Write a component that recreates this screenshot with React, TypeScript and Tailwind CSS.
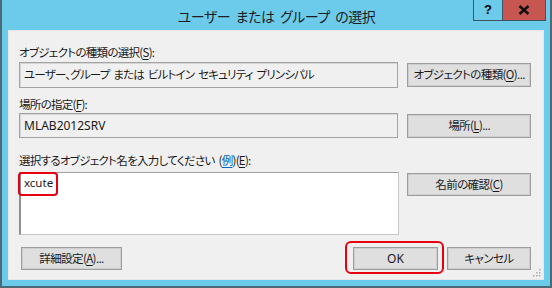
import React from "react";

const font = "font-['Noto_Sans_CJK_JP','Noto_Sans',sans-serif] [font-feature-settings:'palt']";

function U({ children }: { children: React.ReactNode }) {
  return <span className="underline underline-offset-2">{children}</span>;
}

function Btn({ className, children }: { className: string; children: React.ReactNode }) {
  return (
    <div
      className={`flex items-center justify-center whitespace-nowrap border border-[#9d9d9d] bg-[#dfdfdf] shadow-[inset_0_0_0_1px_#cfcfcf] text-[11.5px] tracking-[-0.6px] text-[#1a1a1a] leading-none ${className}`}
    >
      {children}
    </div>
  );
}

export default function App() {
  return (
    <div className={`${font} relative w-[552px] h-[288px] bg-[#6ccbea] border-l-2 border-r-2 border-b-2 border-[#4d6b77] flex flex-col`}>
      {/* Title bar */}
      <div className="h-[30px] flex items-center justify-center shrink-0">
        <span className="text-[14px] tracking-[-0.5px] [word-spacing:3px] text-[#1e1e1e] leading-none pl-[1px] mt-[1px]">ユーザー または グループ の選択</span>
      </div>
      <div className="absolute top-0 left-[471px] flex">
        <div className="w-[30px] h-[21px] border border-t-0 border-[#3c5560] bg-[#6ccbea] flex items-center justify-center text-[13px] font-bold text-black font-['Liberation_Sans',sans-serif]">?</div>
        <div className="w-[43px] h-[21px] border border-t-0 border-l-0 border-[#3c5560] bg-[#c75550] flex items-center justify-center">
          <svg width="12" height="10" viewBox="0 0 12 10">
            <path d="M1.5 1 L10.5 9 M10.5 1 L1.5 9" stroke="#111" strokeWidth="2.6" />
          </svg>
        </div>
      </div>

      {/* Content */}
      <div className="relative mx-[6px] h-[250px] bg-[#f0f0f0] border border-[#e6e6e6] flex flex-col pl-[10px] pr-[12px] text-[11.5px] tracking-[-0.7px] [word-spacing:2px] text-[#1a1a1a]">
        <div className="mt-[13px] h-[16px] leading-[16px]">
          オブジェクトの種類の選択(<U>S</U>):
        </div>
        <div className="mt-[2px] flex items-center h-[26px]">
          <div className="w-[380px] h-[26px] border border-[#a3a3a3] shadow-[inset_1px_1px_0_#d6d6d6] bg-[#f0f0f0] flex items-center pl-[4px] whitespace-nowrap tracking-[-0.8px]">
            ユーザー、グループ または ビルトイン セキュリティ プリンシパル
          </div>
          <Btn className="ml-[9px] w-[124px] h-[24px]">
            オブジェクトの種類(<U>O</U>)...
          </Btn>
        </div>

        <div className="mt-[8px] h-[16px] leading-[16px]">
          場所の指定(<U>F</U>):
        </div>
        <div className="mt-[1px] flex items-center h-[25px]">
          <div className="w-[380px] h-[25px] border border-[#a3a3a3] shadow-[inset_1px_1px_0_#d6d6d6] bg-[#f0f0f0] flex items-center pl-[4px] text-[12px] tracking-normal font-['Noto_Sans','Noto_Sans_CJK_JP',sans-serif]">
            MLAB2012SRV
          </div>
          <Btn className="ml-[9px] w-[124px] h-[24px]">
            場所(<U>L</U>)...
          </Btn>
        </div>

        <div className="mt-[14px] h-[16px] leading-[16px] whitespace-nowrap">
          選択するオブジェクト名を入力してください (<span className="text-[#0066cc] underline underline-offset-2">例</span>)(<U>E</U>):
        </div>
        <div className="mt-[4px] flex items-start">
          <div className="relative w-[380px] h-[63px] bg-white border border-[#c8c8c8] border-l-2 border-l-[#8f8f8f] border-t-[#a0a0a0]">
            <div className="pl-[3px] pt-[2px] leading-[16px] text-[11.5px] tracking-normal font-['Noto_Sans','Noto_Sans_CJK_JP',sans-serif]">xcute</div>
            <div className="absolute left-[-3px] top-[-1px] w-[40px] h-[24px] border-2 border-[#e60012] rounded-[4px]"></div>
          </div>
          <Btn className="ml-[8px] mt-[1px] w-[124px] h-[23px]">
            名前の確認(<U>C</U>)
          </Btn>
        </div>

        <div className="mt-[12px] flex items-center h-[23px]">
          <Btn className="ml-[2px] w-[101px] h-[23px]">
            詳細設定(<U>A</U>)...
          </Btn>
          <div className="relative ml-[231px]">
            <Btn className="w-[85px] h-[23px] text-[12px] tracking-normal font-['Noto_Sans',sans-serif]">OK</Btn>
            <div className="absolute left-[-8px] top-[-6px] w-[99px] h-[33px] border-2 border-[#e60012] rounded-[6px]"></div>
          </div>
          <Btn className="ml-[9px] w-[84px] h-[23px]">キャンセル</Btn>
        </div>
        <svg className="absolute right-[2px] bottom-[2px]" width="8" height="8" viewBox="0 0 8 8">
          <g fill="#a8a8a8">
            <rect x="6" y="0" width="1.5" height="1.5" />
            <rect x="3" y="3" width="1.5" height="1.5" />
            <rect x="6" y="3" width="1.5" height="1.5" />
            <rect x="0" y="6" width="1.5" height="1.5" />
            <rect x="3" y="6" width="1.5" height="1.5" />
            <rect x="6" y="6" width="1.5" height="1.5" />
          </g>
        </svg>
      </div>
    </div>
  );
}
